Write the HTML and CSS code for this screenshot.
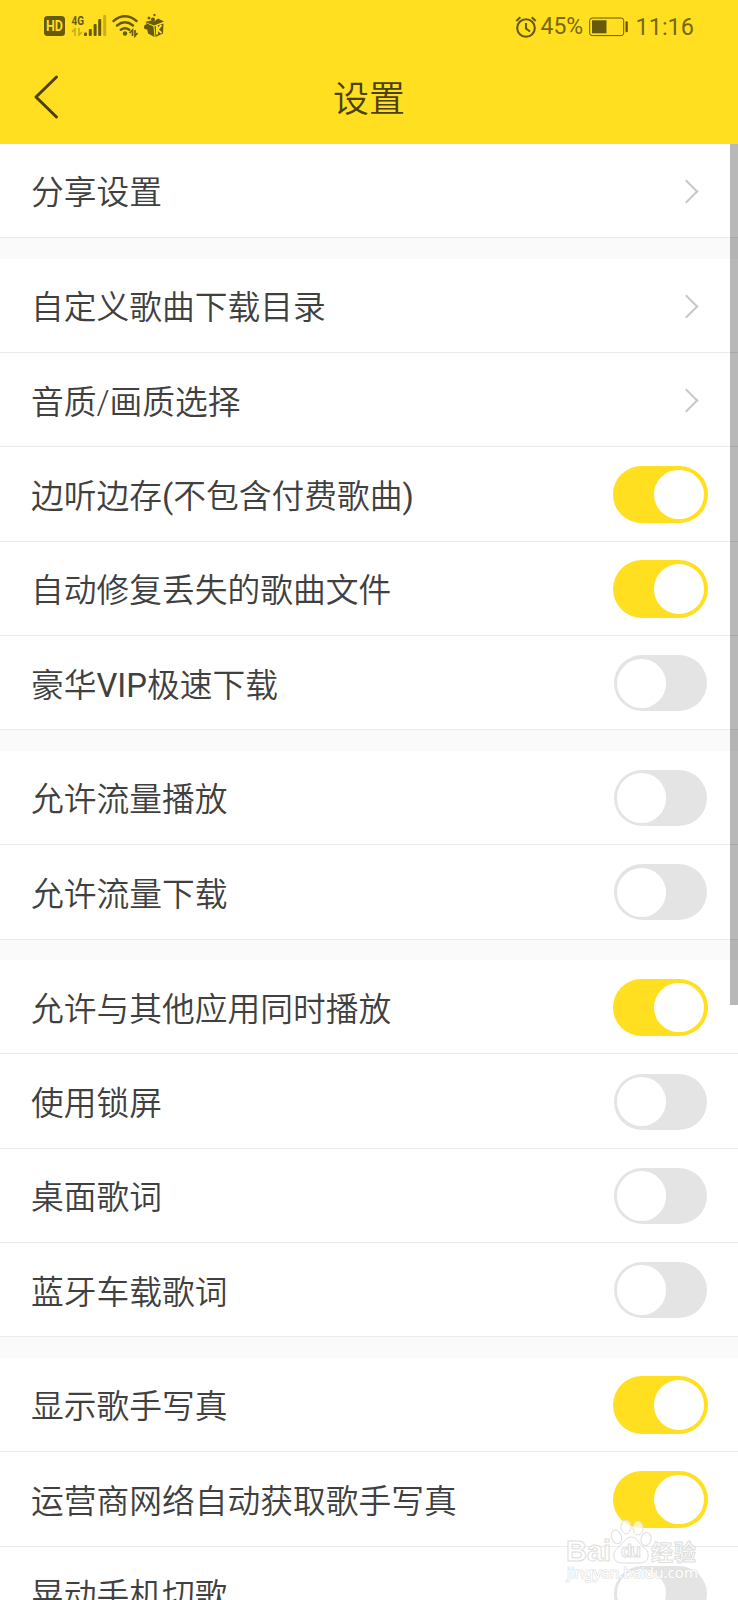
FILE: index.html
```html
<!DOCTYPE html>
<html lang="zh-CN">
<head>
  <meta charset="UTF-8">
  <meta name="viewport" content="width=device-width, initial-scale=1.0">
  <title>设置</title>
  <link rel="stylesheet" href="styles.css">
</head>
<body>
  <header class="header">
    <div class="status-bar">
      <svg class="status-icons" width="124" height="28" viewBox="0 0 124 28" fill="#665a0c">
        <rect x="0" y="3" width="21" height="20" rx="3.5"/>
        <text x="10.5" y="18" class="hd" text-anchor="middle" textLength="17" lengthAdjust="spacingAndGlyphs">HD</text>
        <text x="27.5" y="11.5" class="net" textLength="12.5" lengthAdjust="spacingAndGlyphs">4G</text>
        <path d="M28 19l3-3v7M35 15v7l3-3" fill="none" stroke="#665a0c" stroke-width="1.5" opacity=".4"/>
        <rect x="40" y="19.5" width="3" height="3.5" rx="1"/>
        <rect x="44.8" y="16" width="3" height="7" rx="1"/>
        <rect x="49.6" y="11" width="3" height="12" rx="1"/>
        <rect x="54.2" y="6" width="3" height="17" rx="1"/>
        <rect x="59.2" y="2" width="3" height="21" rx="1" opacity=".35"/>
        <g fill="none" stroke="#665a0c" stroke-width="2.4" stroke-linecap="round">
          <path d="M69.500 8q11.500-9.500 23 0M73 12.500q8-6.300 16 0M76.800 16.800q4.200-3.100 8.400 0"/>
        </g>
        <circle cx="81" cy="20.500" r="2.200"/>
        <path d="M85.500 20l3-3v6M91 17v6l2.500-3" fill="none" stroke="#665a0c" stroke-width="1.700"/>
        <!-- music box -->
        <path d="M102 10l7.500 3.500 1 10.500-6.500-3.500zM110.500 13.500l9-3-.5 10-7.500 3.500zM101 9l6-1.500 3 1 4-3 6 3-10 4z"/>
        <circle cx="105" cy="5" r="1.500"/><circle cx="110.500" cy="2" r="1.200"/><circle cx="109" cy="6.500" r="2"/><circle cx="102.500" cy="14" r="2.500"/>
        <path d="M113 12.500v9M117.500 12l-4 4.500 4 3.500" fill="none" stroke="#ffdf20" stroke-width="2"/>
      </svg>
      <div class="status-right">
        <svg width="22" height="24" viewBox="0 0 22 24" fill="none" stroke="#665a0c" stroke-width="2.100">
          <circle cx="11" cy="13" r="8.800"/>
          <path d="M11 8v5.500l4 3M1.300 6l4-3.800M20.700 6l-4-3.800"/>
        </svg>
        <span class="percent">45%</span>
        <svg class="battery" width="40" height="20" viewBox="0 0 40 20" fill="#665a0c">
          <rect x=".7" y="1" width="34" height="17.600" rx="2.500" fill="none" stroke="#665a0c" stroke-width="1"/>
          <rect x="3" y="3.300" width="14.500" height="13"/>
          <rect x="36.500" y="4.300" width="2.300" height="11" rx="1"/>
        </svg>
        <span class="clock">11:16</span>
      </div>
    </div>
    <div class="title-bar">
      <svg class="back" width="26" height="46" viewBox="0 0 26 46">
        <path d="M23.500 3L3 23l20.500 20"/>
      </svg>
      <h1>设置</h1>
    </div>
  </header>

  <main class="settings">
    <section class="group">
      <div class="row"><span>分享设置</span><i class="arrow"></i></div>
    </section>
    <section class="group">
      <div class="row"><span>自定义歌曲下载目录</span><i class="arrow"></i></div>
      <div class="row"><span>音质/画质选择</span><i class="arrow"></i></div>
      <div class="row"><span>边听边存<b>(</b>不包含付费歌曲<b>)</b></span><i class="switch on"></i></div>
      <div class="row"><span>自动修复丢失的歌曲文件</span><i class="switch on"></i></div>
      <div class="row"><span>豪华<b>VIP</b>极速下载</span><i class="switch"></i></div>
    </section>
    <section class="group">
      <div class="row"><span>允许流量播放</span><i class="switch"></i></div>
      <div class="row"><span>允许流量下载</span><i class="switch"></i></div>
    </section>
    <section class="group">
      <div class="row"><span>允许与其他应用同时播放</span><i class="switch on"></i></div>
      <div class="row"><span>使用锁屏</span><i class="switch"></i></div>
      <div class="row"><span>桌面歌词</span><i class="switch"></i></div>
      <div class="row"><span>蓝牙车载歌词</span><i class="switch"></i></div>
    </section>
    <section class="group">
      <div class="row"><span>显示歌手写真</span><i class="switch on"></i></div>
      <div class="row"><span>运营商网络自动获取歌手写真</span><i class="switch on"></i></div>
      <div class="row"><span>晃动手机切歌</span><i class="switch"></i></div>
    </section>
  </main>

  <div class="scrollbar"></div>

  <svg class="watermark" width="140" height="66" viewBox="0 0 140 66">
    <g class="mark">
      <text x="1" y="42" class="brand" textLength="45">Bai</text>
      <ellipse cx="51.500" cy="18" rx="5" ry="7" transform="rotate(-20 51.500 18)"/>
      <ellipse cx="61" cy="8" rx="5" ry="7"/>
      <ellipse cx="73" cy="9" rx="5" ry="7"/>
      <ellipse cx="81" cy="20" rx="5" ry="6.500" transform="rotate(15 81 20)"/>
      <path d="M66 18c5 0 7 5 11 9 4 3 7 6 6 11-1 7-8 6-17 6s-16 1-17-6c-1-5 2-8 6-11 4-4 6-9 11-9z"/>
      <text x="56" y="38" class="du" textLength="20">du</text>
      <text x="86" y="41" class="cn" textLength="45">经验</text>
    </g>
    <text x="2" y="59" class="site" textLength="131">jingyan.baidu.com</text>
  </svg>
</body>
</html>
```
FILE: styles.css
```css
* {
  box-sizing: border-box;
}
body {
  margin: 0;
  position: relative;
  height: 1600px;
  overflow: hidden;
  background: #fafafa;
  color: #404040;
  font-family: Roboto, "Noto Sans CJK SC", sans-serif;
}

/* header */
.header {
  height: 144px;
  background: #ffdf20;
}
.status-bar {
  height: 52px;
  padding: 1px 44px 0;
  display: flex;
  justify-content: space-between;
  align-items: center;
  color: #75690f;
}
.hd {
  font: bold 14px Roboto, sans-serif;
  fill: #ffdf20;
}
.net {
  font: bold 13px Roboto, sans-serif;
}
.status-icons {
  margin-top: 1px;
}
.status-right {
  display: flex;
  align-items: center;
  font-size: 23.5px;
}
.percent {
  margin-left: 3px;
  width: 44px;
  font-size: 23px;
}
.battery {
  margin: 0 6px 0 5px;
}
.title-bar {
  height: 92px;
  padding: 0 33px 4px;
  display: grid;
  grid-template-columns: 26px 1fr 26px;
  align-items: center;
}
.back {
  margin-top: 2px;
  fill: none;
  stroke: #4b4008;
  stroke-width: 3;
  stroke-linecap: round;
  stroke-linejoin: round;
}
.title-bar h1 {
  margin: 0;
  padding-bottom: 1px;
  font-size: 36px;
  font-weight: 350;
  text-align: center;
  color: #4b4008;
}

/* settings list */
.group {
  margin-bottom: 20.6px;
  background: #fff;
}
.row {
  height: 94.3px;
  padding: 1px 30px 0 31px;
  display: flex;
  justify-content: space-between;
  align-items: center;
  border-bottom: 1px solid #ebebeb;
  font-size: 32.75px;
  font-weight: 350;
  white-space: nowrap;
}
.row span {
  padding-bottom: 2.4px;
}
.row b {
  font-weight: 400;
}
.arrow {
  width: 17px;
  height: 17px;
  margin: 0 13px 0 0;
  border: solid #c8c8c8;
  border-width: 2px 2px 0 0;
  transform: rotate(45deg);
}
.switch {
  width: 93px;
  height: 56px;
  margin-right: 1px;
  padding: 3.3px 3px;
  display: flex;
  border-radius: 28px;
  background: #e4e4e4;
}
.switch::before {
  content: "";
  width: 49.4px;
  height: 49.4px;
  border-radius: 50%;
  background: #fff;
}
.switch.on {
  width: 95px;
  height: 57.4px;
  margin-right: 0;
  padding: 4px 4.5px;
  justify-content: flex-end;
  border-radius: 29px;
  background: #ffdf20;
}

.scrollbar {
  position: absolute;
  top: 144px;
  right: 0;
  width: 8px;
  height: 861px;
  background: rgba(0, 0, 0, 0.28);
}

/* watermark over the bottom corner */
.watermark {
  position: absolute;
  left: 565px;
  top: 1519px;
  overflow: visible;
}
.mark {
  fill: rgba(255, 255, 255, 0.65);
  stroke: #dedede;
  stroke-width: 1;
}
.brand {
  font: bold 29px "Liberation Sans", sans-serif;
}
.du {
  font: bold 18px "Liberation Sans", sans-serif;
}
.cn {
  font: bold 22px "Noto Sans CJK SC", sans-serif;
}
.site {
  font: 15px "Noto Sans", sans-serif;
  fill: #fff;
  stroke: #dcdcdc;
  stroke-width: 1.2;
  paint-order: stroke;
}
```
